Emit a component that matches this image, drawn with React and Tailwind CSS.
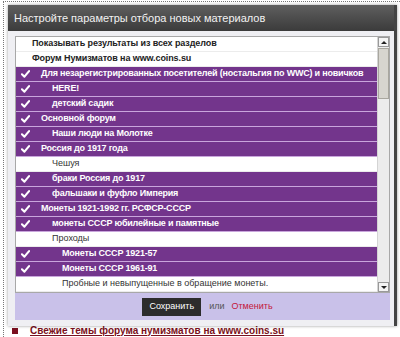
import React from 'react';

const rows = [
  { text: 'Показывать результаты из всех разделов', level: 0, head: true },
  { text: 'Форум Нумизматов на www.coins.su', level: 0, head: true },
  { text: 'Для незарегистрированных посетителей (ностальгия по WWC) и новичков', level: 1, on: true },
  { text: 'HERE!', level: 2, on: true },
  { text: 'детский садик', level: 2, on: true },
  { text: 'Основной форум', level: 1, on: true },
  { text: 'Наши люди на Молотке', level: 2, on: true },
  { text: 'Россия до 1917 года', level: 1, on: true },
  { text: 'Чешуя', level: 2 },
  { text: 'браки Россия до 1917', level: 2, on: true },
  { text: 'фальшаки и фуфло Империя', level: 2, on: true },
  { text: 'Монеты 1921-1992 гг. РСФСР-СССР', level: 1, on: true },
  { text: 'монеты СССР юбилейные и памятные', level: 2, on: true },
  { text: 'Проходы', level: 2 },
  { text: 'Монеты СССР 1921-57', level: 3, on: true },
  { text: 'Монеты СССР 1961-91', level: 3, on: true },
  { text: 'Пробные и невыпущенные в обращение монеты.', level: 3 },
];

// text offset from the check column (16px wide)
const indent = ['pl-0', 'pl-[9px]', 'pl-[20px]', 'pl-[30px]'];

function Check() {
  return (
    <svg width="9" height="8" viewBox="0 0 10 9" className="shrink-0">
      <path d="M1 4.8 L3.8 7.5 L9 1.3" fill="none" stroke="#fff" strokeWidth="2.4" strokeLinecap="round" strokeLinejoin="round" />
    </svg>
  );
}

function Row({ row }) {
  if (row.on) {
    return (
      <div className="h-[15px] flex items-center bg-[#73358c] border-b border-[#c9a6dc] text-white font-bold tracking-[-0.2px] whitespace-nowrap">
        <div className="w-[16px] shrink-0 pl-[5px] flex items-center">
          <Check />
        </div>
        <div className={indent[row.level]}>{row.text}</div>
      </div>
    );
  }
  return (
    <div
      className={`h-[15px] flex items-center border-b border-[#ececec] whitespace-nowrap ${
        row.head ? 'font-bold text-[#222] tracking-[-0.1px]' : 'text-[#333]'
      }`}
    >
      <div className="w-[16px] shrink-0" />
      <div className={indent[row.level]}>{row.text}</div>
    </div>
  );
}

function Scrollbar() {
  return (
    <div className="w-[12px] shrink-0 bg-[#ececec] border-l border-[#d4d4d4] flex flex-col">
      <div className="h-[10px] bg-[#f4f4f4] border border-[#999] flex items-center justify-center">
        <div className="w-0 h-0 border-l-[3px] border-r-[3px] border-b-[3px] border-l-transparent border-r-transparent border-b-[#222]" />
      </div>
      <div className="mt-[1px] h-[51px] bg-[#d7d5cf] border border-[#a9a79f]" />
      <div className="flex-1" />
      <div className="h-[10px] bg-[#f4f4f4] border border-[#999] flex items-center justify-center">
        <div className="w-0 h-0 border-l-[3px] border-r-[3px] border-t-[3px] border-l-transparent border-r-transparent border-t-[#222]" />
      </div>
    </div>
  );
}

export default function App() {
  return (
    <div
      className="relative w-[400px] h-[337px] overflow-hidden bg-white text-[9px]"
      style={{ fontFamily: '"Liberation Sans", Arial, sans-serif' }}
    >
      {/* page behind the dialog */}
      <div className="ml-[3px] mt-[1px] h-[336px] border-l border-t border-dotted border-[#777] flex flex-col justify-end">
        <div className="flex items-center gap-[12px] pl-[8px] pb-[1px] text-[10px] leading-[11px] text-[#7a1020] font-bold whitespace-nowrap">
          <div className="w-[6px] h-[6px] bg-[#7a1020]" />
          <span className="underline">Свежие темы форума нумизматов на www.coins.su</span>
        </div>
      </div>

      {/* dialog */}
      <div className="absolute left-[8px] top-[5px] w-[389px] h-[321px] bg-[#efeff3] border-r-[3px] border-[#444] shadow-[0_0_3px_rgba(0,0,0,0.4)] flex flex-col">
        <div className="h-[26px] shrink-0 bg-gradient-to-b from-[#5f5f5f] to-[#3b3b3b] flex items-center pl-[6px] text-[11px] text-[#f2f2f2]">
          Настройте параметры отбора новых материалов
        </div>
        <div className="pl-[7px] pr-[4px] pt-[5px]">
          <div className="h-[257px] bg-white border border-[#a8a8a8] flex overflow-hidden">
            <div className="flex-1 min-w-0 overflow-hidden">
              {rows.map((row, i) => (
                <Row key={i} row={row} />
              ))}
            </div>
            <Scrollbar />
          </div>
          <div className="h-[27px] bg-[#c9c1e9] flex items-center justify-center gap-[8px] pl-[10px]">
            <div className="h-[18px] px-[7px] bg-[#2c2c2c] text-white flex items-center">Сохранить</div>
            <span className="text-[#555]">или</span>
            <span className="text-[#c4173b] -ml-[1px]">Отменить</span>
          </div>
        </div>
      </div>
    </div>
  );
}
